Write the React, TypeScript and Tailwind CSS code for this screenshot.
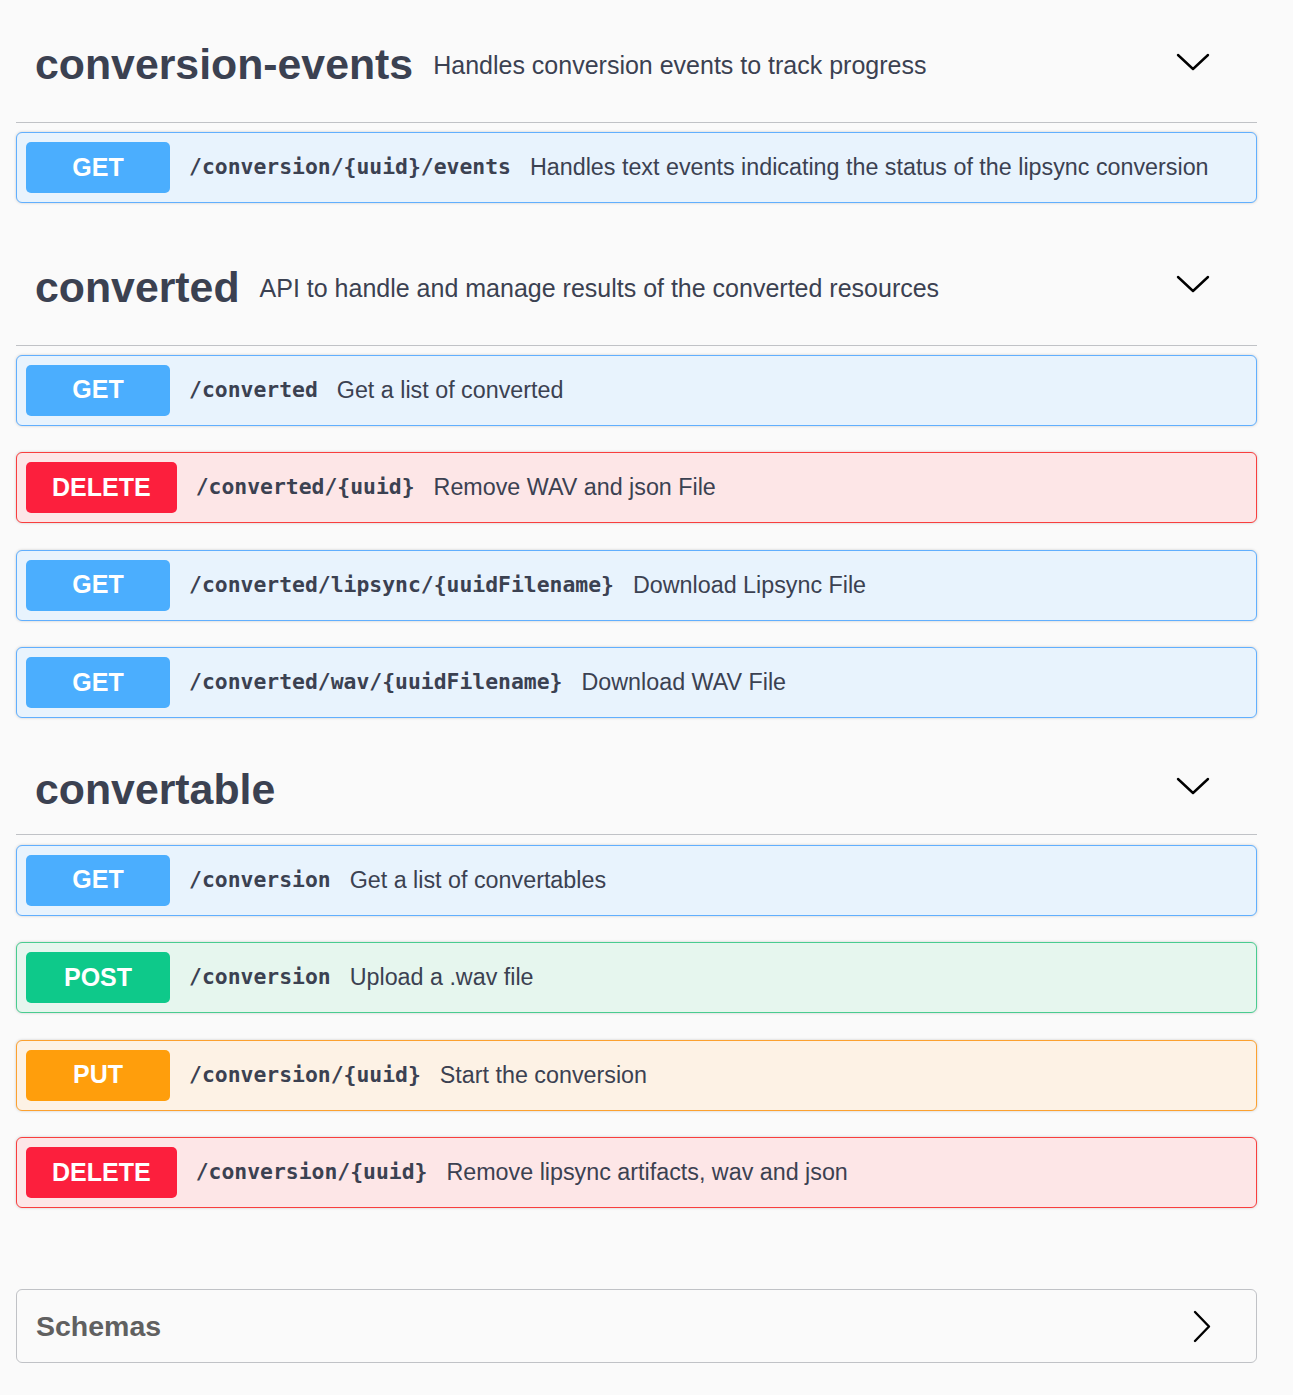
import React from "react";

type Method = "GET" | "POST" | "PUT" | "DELETE";

type Op = { method: Method; path: string; summary: string };

type Tag = { name: string; description?: string; ops: Op[] };

const methodStyles: Record<Method, { row: string; badge: string }> = {
  GET: { row: "border-[#61affe] bg-[#e8f3fd]", badge: "bg-[#4baefe]" },
  POST: { row: "border-[#49cc90] bg-[#e6f6ee]", badge: "bg-[#0ec98a]" },
  PUT: { row: "border-[#fca130] bg-[#fdf2e5]", badge: "bg-[#ff9e0c]" },
  DELETE: { row: "border-[#f93e3e] bg-[#fde6e7]", badge: "bg-[#fc1f3d]" },
};

const tags: Tag[] = [
  {
    name: "conversion-events",
    description: "Handles conversion events to track progress",
    ops: [
      {
        method: "GET",
        path: "/conversion/{uuid}/events",
        summary: "Handles text events indicating the status of the lipsync conversion",
      },
    ],
  },
  {
    name: "converted",
    description: "API to handle and manage results of the converted resources",
    ops: [
      { method: "GET", path: "/converted", summary: "Get a list of converted" },
      { method: "DELETE", path: "/converted/{uuid}", summary: "Remove WAV and json File" },
      { method: "GET", path: "/converted/lipsync/{uuidFilename}", summary: "Download Lipsync File" },
      { method: "GET", path: "/converted/wav/{uuidFilename}", summary: "Download WAV File" },
    ],
  },
  {
    name: "convertable",
    ops: [
      { method: "GET", path: "/conversion", summary: "Get a list of convertables" },
      { method: "POST", path: "/conversion", summary: "Upload a .wav file" },
      { method: "PUT", path: "/conversion/{uuid}", summary: "Start the conversion" },
      { method: "DELETE", path: "/conversion/{uuid}", summary: "Remove lipsync artifacts, wav and json" },
    ],
  },
];

const sans = "font-['Liberation_Sans',Arial,sans-serif]";

function ChevronDown() {
  return (
    <svg width="34" height="18" viewBox="0 0 34 18" fill="none" className="mr-[47px] -mt-[6px]">
      <polyline points="2,2 17,16 32,2" stroke="#000" strokeWidth="2.4" strokeLinecap="round" strokeLinejoin="round" />
    </svg>
  );
}

function ChevronRight() {
  return (
    <svg width="19" height="33" viewBox="0 0 19 33" fill="none" className="mr-[44px]">
      <polyline points="2,2 16,16.5 2,31" stroke="#000" strokeWidth="2.4" strokeLinecap="round" strokeLinejoin="round" />
    </svg>
  );
}

function OpRow({ op }: { op: Op }) {
  const s = methodStyles[op.method];
  return (
    <div
      className={`mb-[26.5px] flex items-center rounded-[6px] border p-[9px] shadow-[0_0_3px_rgba(0,0,0,0.19)] ${s.row}`}
    >
      <span
        className={`flex h-[51px] min-w-[144px] items-center justify-center rounded-[5px] px-[26px] text-[25px] font-bold text-white ${sans} ${s.badge}`}
      >
        {op.method}
      </span>
      <span className="ml-[19px] font-['DejaVu_Sans_Mono',monospace] text-[21.4px] font-bold text-[#3b4151]">
        {op.path}
      </span>
      <span className={`ml-[19px] text-[23.3px] text-[#3b4151] ${sans}`}>{op.summary}</span>
    </div>
  );
}

function TagSection({ tag }: { tag: Tag }) {
  return (
    <section>
      <div
        className={`flex items-center border-b border-[rgba(59,65,81,0.3)] pl-[19px] ${
          tag.description ? "mb-[9px] h-[116px]" : "mb-[10px] h-[90px]"
        }`}
      >
        <h3 className={`text-[42.8px] font-bold text-[#3b4151] ${sans}`}>{tag.name}</h3>
        {tag.description && (
          <span className={`ml-[20px] pt-[3px] text-[25px] text-[#3b4151] ${sans}`}>{tag.description}</span>
        )}
        <div className="ml-auto">
          <ChevronDown />
        </div>
      </div>
      {tag.ops.map((op, i) => (
        <OpRow key={i} op={op} />
      ))}
    </section>
  );
}

export default function App() {
  return (
    <div className="min-h-screen bg-[#fafafa] pt-[7px] pb-[40px]">
      <div className="ml-[16px] w-[1241px]">
        {tags.map((t) => (
          <TagSection key={t.name} tag={t} />
        ))}
        <div className="mt-[81px] flex h-[74px] items-center rounded-[6px] border border-[rgba(59,65,81,0.3)] pl-[19px]">
          <span className={`text-[28.5px] font-bold text-[#606060] ${sans}`}>Schemas</span>
          <div className="ml-auto">
            <ChevronRight />
          </div>
        </div>
      </div>
    </div>
  );
}
